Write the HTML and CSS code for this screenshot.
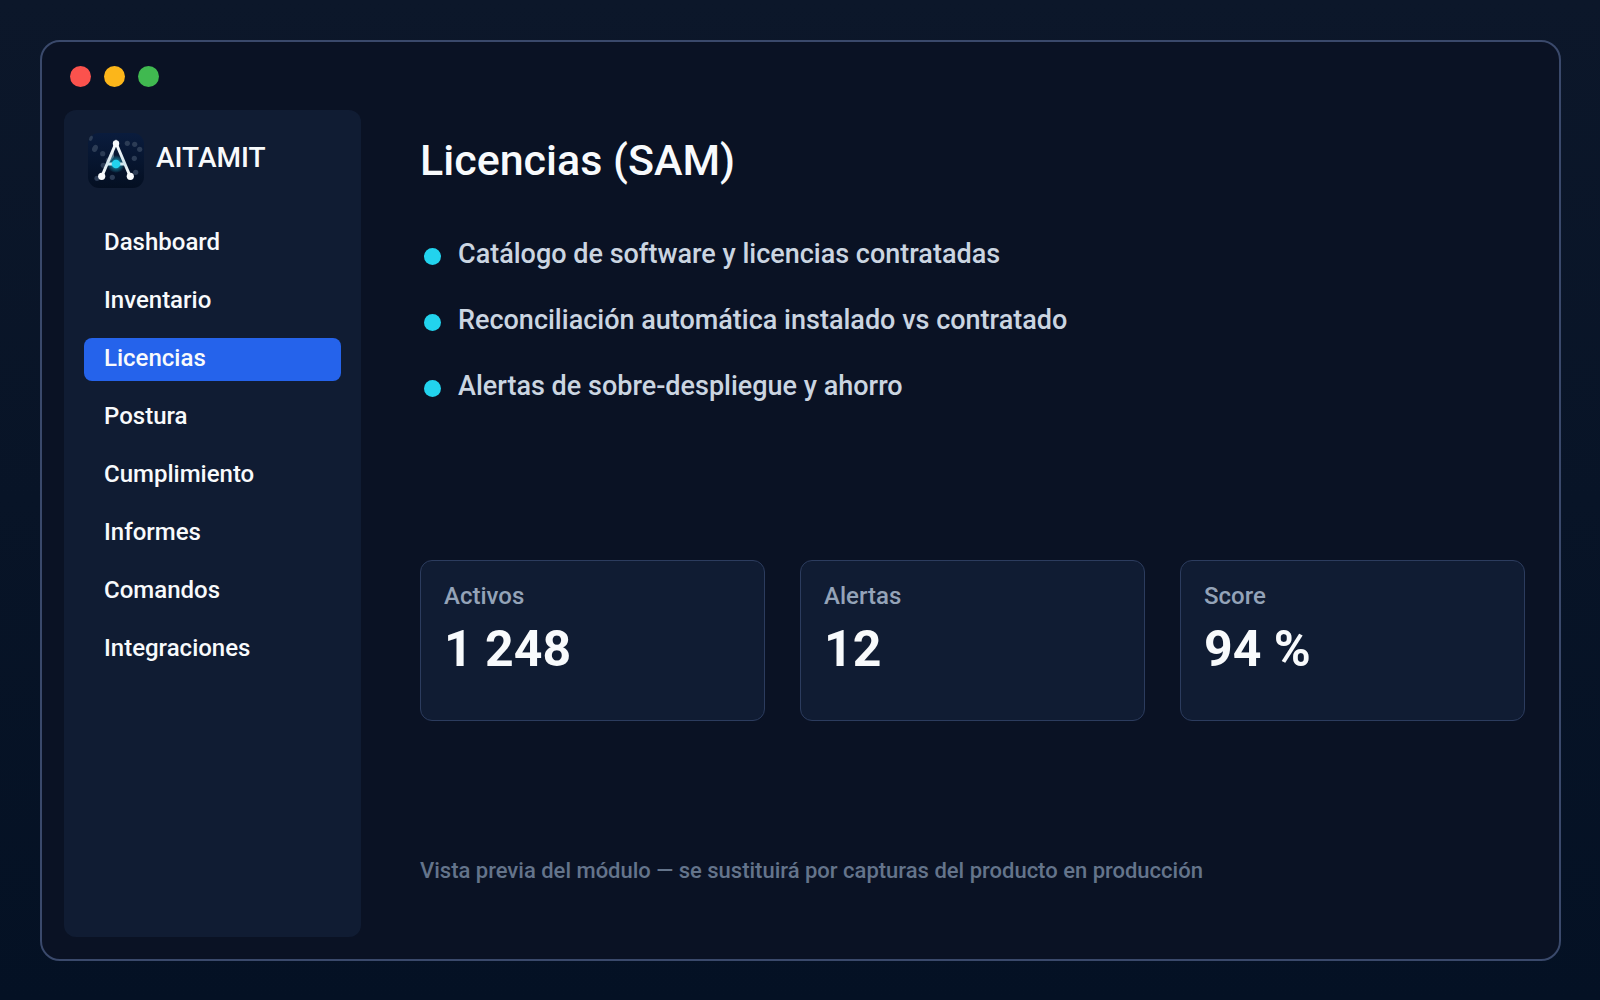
FILE: index.html
```html
<!DOCTYPE html>
<html lang="es">
<head>
<meta charset="utf-8">
<meta name="viewport" content="width=device-width, initial-scale=1">
<title>AITAMIT – Licencias (SAM)</title>
<link rel="stylesheet" href="styles.css">
</head>
<body>
<div class="window">
  <div class="window-controls">
    <span class="control control-close"></span>
    <span class="control control-minimize"></span>
    <span class="control control-zoom"></span>
  </div>
  <div class="workspace">
    <aside class="sidebar">
      <div class="brand">
        <svg class="logo" viewBox="0 0 56 56" aria-hidden="true">
          <defs>
            <linearGradient id="tile" x1="0" y1="0" x2="0" y2="1">
              <stop offset="0" stop-color="#0a1c3d"/>
              <stop offset="1" stop-color="#040f22"/>
            </linearGradient>
            <radialGradient id="glow">
              <stop offset="0.3" stop-color="#22d3ee" stop-opacity="0.6"/>
              <stop offset="1" stop-color="#22d3ee" stop-opacity="0"/>
            </radialGradient>
            <linearGradient id="leg" x1="0" y1="0" x2="0" y2="1">
              <stop offset="0" stop-color="#ffffff"/>
              <stop offset="0.6" stop-color="#d3e3ea"/>
              <stop offset="1" stop-color="#ffffff"/>
            </linearGradient>
          </defs>
          <rect width="56" height="55" rx="11" fill="url(#tile)"/>
          <g fill="#2c3c55">
            <ellipse cx="3" cy="5.3" rx="1.7" ry="2.7" transform="rotate(25 3 5.3)"/>
            <ellipse cx="7" cy="15.3" rx="2.7" ry="3.7" transform="rotate(25 7 15.3)"/>
            <circle cx="14.7" cy="20.7" r="2.6"/>
            <circle cx="39.3" cy="10.3" r="2.6"/>
            <circle cx="46.7" cy="11.3" r="2.6"/>
            <circle cx="51.7" cy="16.3" r="2.6"/>
            <circle cx="46.3" cy="25.3" r="2.6"/>
            <circle cx="47.7" cy="39.3" r="2.6"/>
            <circle cx="24.3" cy="44.3" r="2.6"/>
            <circle cx="9" cy="45.3" r="2.6"/>
            <circle cx="15.3" cy="32.3" r="2.6"/>
            <circle cx="20.3" cy="27" r="2.6"/>
          </g>
          <path d="M26 17 L26 24 L20 31 Z" fill="#52677c"/>
          <circle cx="28" cy="31" r="9" fill="url(#glow)"/>
          <path d="M14 43 L28 10 L42 43" fill="none" stroke="url(#leg)" stroke-width="3"/>
          <path d="M19 31 H37" stroke="#cfe6ee" stroke-width="3"/>
          <circle cx="28" cy="10.5" r="3.2" fill="#f8fafc"/>
          <circle cx="13.7" cy="43.3" r="3.6" fill="#f8fafc"/>
          <circle cx="42.3" cy="43.3" r="3.6" fill="#f8fafc"/>
          <circle cx="28" cy="31" r="4.3" fill="#22d3ee"/>
        </svg>
        <span class="brand-name">AITAMIT</span>
      </div>
      <nav class="nav">
        <a class="nav-item" href="#dashboard">Dashboard</a>
        <a class="nav-item" href="#inventario">Inventario</a>
        <a class="nav-item nav-item-active" href="#licencias" aria-current="page">Licencias</a>
        <a class="nav-item" href="#postura">Postura</a>
        <a class="nav-item" href="#cumplimiento">Cumplimiento</a>
        <a class="nav-item" href="#informes">Informes</a>
        <a class="nav-item" href="#comandos">Comandos</a>
        <a class="nav-item" href="#integraciones">Integraciones</a>
      </nav>
    </aside>
    <main class="content">
      <h1 class="title">Licencias (SAM)</h1>
      <ul class="features">
        <li class="feature">Catálogo de software y licencias contratadas</li>
        <li class="feature">Reconciliación automática instalado vs contratado</li>
        <li class="feature">Alertas de sobre-despliegue y ahorro</li>
      </ul>
      <section class="stats">
        <article class="card">
          <h2 class="card-label">Activos</h2>
          <p class="card-value">1 248</p>
        </article>
        <article class="card">
          <h2 class="card-label">Alertas</h2>
          <p class="card-value">12</p>
        </article>
        <article class="card">
          <h2 class="card-label">Score</h2>
          <p class="card-value">94 %</p>
        </article>
      </section>
      <p class="note">Vista previa del módulo — se sustituirá por capturas del producto en producción</p>
    </main>
  </div>
</div>
</body>
</html>
```
FILE: styles.css
```css
* {
  box-sizing: border-box;
  margin: 0;
  padding: 0;
}

body {
  display: flex;
  min-height: 100vh;
  padding: 40px 39px 39px 40px;
  background: linear-gradient(#0c172a, #041124);
  color: #f8fafc;
  font-family: Bahnschrift, "DIN Alternate", Roboto, sans-serif;
  font-weight: 500;
}

.window {
  display: flex;
  flex: 1;
  flex-direction: column;
  gap: 23px;
  padding: 24px 34px 22px 22px;
  border: 2px solid #3a496b;
  border-radius: 20px;
  background: #0a1224;
}

.window-controls {
  display: flex;
  gap: 13px;
  padding-left: 6px;
}

.control {
  width: 21px;
  height: 21px;
  border-radius: 50%;
}

.control-close { background: #fb524d; }
.control-minimize { background: #fcb61a; }
.control-zoom { background: #40b950; }

.workspace {
  display: flex;
  flex: 1;
  gap: 59px;
}

.sidebar {
  flex: none;
  width: 297px;
  padding: 23px 20px;
  border-radius: 12px;
  background: #101c33;
}

.brand {
  display: flex;
  gap: 12px;
  padding-left: 4px;
}

.logo {
  width: 56px;
  height: 56px;
}

.brand-name {
  font-size: 28px;
  line-height: 50px;
}

.nav {
  display: flex;
  flex-direction: column;
  gap: 15px;
  margin-top: 33px;
}

.nav-item {
  height: 43px;
  padding-left: 20px;
  border-radius: 8px;
  color: inherit;
  font-size: 24px;
  line-height: 40px;
  text-decoration: none;
}

.nav-item-active {
  background: #2563eb;
}

.content {
  flex: 1;
  min-width: 0;
}

.title {
  margin-top: 22px;
  font-size: 43px;
  font-weight: 500;
  line-height: 56px;
}

.features {
  display: flex;
  flex-direction: column;
  gap: 30px;
  margin-top: 48px;
  color: #cbd5e1;
  font-size: 27px;
  list-style: none;
}

.feature {
  display: flex;
  gap: 17px;
  padding-left: 4px;
  line-height: 36px;
}

.feature::before {
  flex: none;
  width: 17px;
  height: 17px;
  margin-top: 12px;
  border-radius: 50%;
  background: #22d3ee;
  content: "";
}

.stats {
  display: grid;
  grid-template-columns: repeat(3, 1fr);
  gap: 35px;
  margin-top: 156px;
}

.card {
  min-height: 161px;
  padding: 20px 23px;
  border: 1px solid #2c3c5e;
  border-radius: 12px;
  background: #101c33;
}

.card-label {
  color: #94a3b8;
  font-size: 24px;
  font-weight: 500;
  line-height: 30px;
}

.card-value {
  margin-top: 6px;
  font-size: 50px;
  font-weight: 700;
  line-height: 64px;
}

.note {
  margin-top: 135px;
  color: #64748b;
  font-size: 22px;
  line-height: 30px;
}
```
